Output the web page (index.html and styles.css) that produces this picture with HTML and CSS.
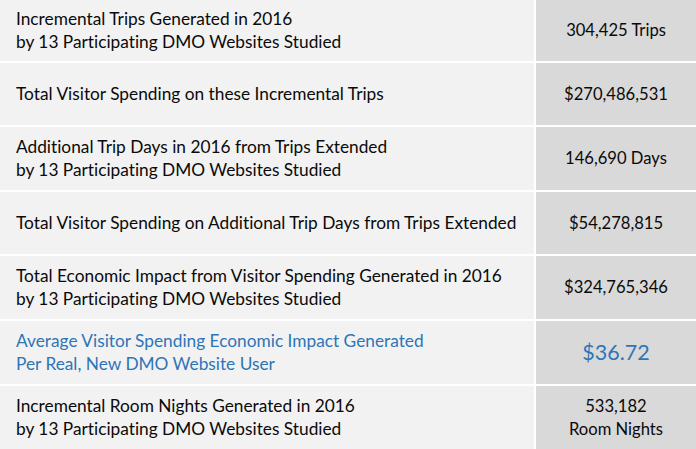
FILE: index.html
```html
<!DOCTYPE html>
<html>
<head>
<meta charset="utf-8">
<link rel="stylesheet" href="styles.css">
</head>
<body>
<div class="table">
  <div class="label r1">Incremental Trips Generated in 2016<br>by 13 Participating DMO Websites Studied</div>
  <div class="value r1">304,425 Trips</div>
  <div class="label">Total Visitor Spending on these Incremental Trips</div>
  <div class="value">$270,486,531</div>
  <div class="label">Additional Trip Days in 2016 from Trips Extended<br>by 13 Participating DMO Websites Studied</div>
  <div class="value">146,690 Days</div>
  <div class="label">Total Visitor Spending on Additional Trip Days from Trips Extended</div>
  <div class="value">$54,278,815</div>
  <div class="label">Total Economic Impact from Visitor Spending Generated in 2016<br>by 13 Participating DMO Websites Studied</div>
  <div class="value">$324,765,346</div>
  <div class="label accent">Average Visitor Spending Economic Impact Generated<br>Per Real, New DMO Website User</div>
  <div class="value accent big">$36.72</div>
  <div class="label">Incremental Room Nights Generated in 2016<br>by 13 Participating DMO Websites Studied</div>
  <div class="value">533,182<br>Room Nights</div>
</div>
</body>
</html>
```
FILE: styles.css
```css
html, body {
  margin: 0;
  padding: 0;
  background: #ffffff;
}
.table {
  display: grid;
  grid-template-columns: 534px 160px;
  grid-template-rows: 61px 62px 63px 62px 63px 63px 63px;
  column-gap: 2px;
  row-gap: 2px;
  width: 696px;
  height: 449px;
  font-family: "Lato", "Liberation Sans", sans-serif;
  font-size: 17.3px;
  line-height: 22.5px;
  font-variant-ligatures: none;
  color: #0a0a0a;
}
.label {
  background: #f2f2f2;
  display: flex;
  align-items: center;
  padding-left: 16px;
}
.value {
  background: #d9d9d9;
  display: flex;
  align-items: center;
  justify-content: center;
  text-align: center;
  font-size: 16.6px;
}
.accent {
  color: #2e75b6;
}
.value.big {
  font-size: 21.5px;
}
```
